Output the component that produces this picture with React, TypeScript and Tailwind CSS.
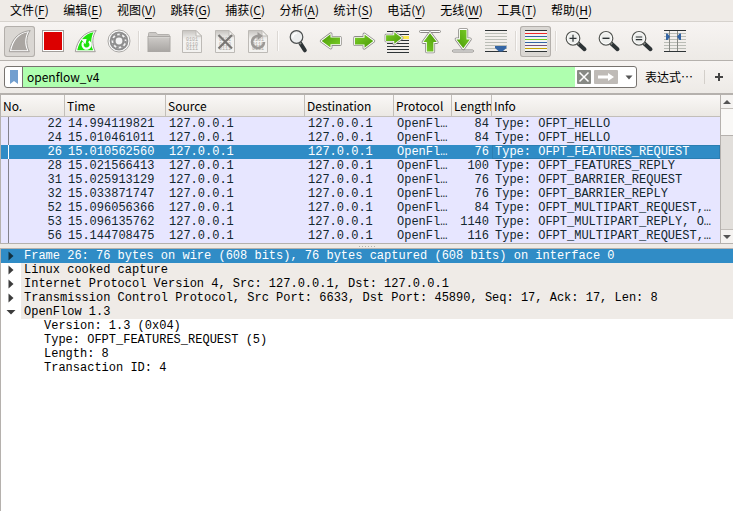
import type { ReactNode } from "react";
import clsx from "clsx";

const menus = [
  ["文件", "F"],
  ["编辑", "E"],
  ["视图", "V"],
  ["跳转", "G"],
  ["捕获", "C"],
  ["分析", "A"],
  ["统计", "S"],
  ["电话", "Y"],
  ["无线", "W"],
  ["工具", "T"],
  ["帮助", "H"],
];

type Packet = {
  no: number;
  time: string;
  length: number;
  info: string;
  selected?: boolean;
};

const packets: Packet[] = [
  { no: 22, time: "14.994119821", length: 84, info: "Type: OFPT_HELLO" },
  { no: 24, time: "15.010461011", length: 84, info: "Type: OFPT_HELLO" },
  {
    no: 26,
    time: "15.010562560",
    length: 76,
    info: "Type: OFPT_FEATURES_REQUEST",
    selected: true,
  },
  { no: 28, time: "15.021566413", length: 100, info: "Type: OFPT_FEATURES_REPLY" },
  { no: 31, time: "15.025913129", length: 76, info: "Type: OFPT_BARRIER_REQUEST" },
  { no: 32, time: "15.033871747", length: 76, info: "Type: OFPT_BARRIER_REPLY" },
  { no: 52, time: "15.096056366", length: 84, info: "Type: OFPT_MULTIPART_REQUEST,…" },
  { no: 53, time: "15.096135762", length: 1140, info: "Type: OFPT_MULTIPART_REPLY, O…" },
  { no: 56, time: "15.144708475", length: 116, info: "Type: OFPT_MULTIPART_REQUEST,…" },
];

const layers = [
  "Frame 26: 76 bytes on wire (608 bits), 76 bytes captured (608 bits) on interface 0",
  "Linux cooked capture",
  "Internet Protocol Version 4, Src: 127.0.0.1, Dst: 127.0.0.1",
  "Transmission Control Protocol, Src Port: 6633, Dst Port: 45890, Seq: 17, Ack: 17, Len: 8",
  "OpenFlow 1.3",
];

const fields = [
  "Version: 1.3 (0x04)",
  "Type: OFPT_FEATURES_REQUEST (5)",
  "Length: 8",
  "Transaction ID: 4",
];

function Icon({ children }: { children: ReactNode }) {
  return (
    <svg viewBox="0 0 23 23" className="size-[23px] shrink-0 overflow-visible" fill="none" aria-hidden="true">
      {children}
    </svg>
  );
}

function FinShape({ fill }: { fill: string }) {
  return (
    <>
      <path d="M1.3 21.7C3.5 9.5 10 1.8 22.2 .6C18.2 6 17.6 14.5 21.3 21.7Z" fill="#fff" stroke="#9f9c98" />
      <path d="M3.2 20.3C5.6 10 10.8 3.8 19.6 2.2C16.7 7.5 16.4 14.5 19.2 20.3Z" fill={fill} />
    </>
  );
}

function Paper() {
  return (
    <>
      <path d="M2.5.5H16L21.5 6V22.5H2.5Z" fill="url(#paper)" stroke="#bdbab6" />
      <path d="M16 .5V6H21.5Z" fill="#f4f3f1" stroke="#bdbab6" />
      <g fill="#aaa7a3" fontFamily="Liberation Mono" fontSize="5">
        <text x="6" y="11">0101</text>
        <text x="6" y="15.5">0110</text>
        <text x="6" y="20">0111</text>
      </g>
    </>
  );
}

// points to the right, centred on 12,11; the other directions are rotations
function Arrow({ transform }: { transform?: string }) {
  return (
    <g transform={transform} strokeLinejoin="round">
      <path d="M3 7.8H12.3V4.3L21.5 11L12.3 17.9V14.4H3Z" fill="#fff" stroke="#8c8a87" strokeWidth="3.4" />
      <path d="M3 7.8H12.3V4.3L21.5 11L12.3 17.9V14.4H3Z" fill="#fff" stroke="#fff" strokeWidth="1.8" />
      <path d="M3 7.8H12.5V4.4L21.3 11L12.5 17.8V14.4H3Z" fill="url(#green)" />
    </g>
  );
}

function Lens({ children }: { children: ReactNode }) {
  return (
    <Icon>
      <path d="M14 13.2L20.5 19.2" stroke="#2e3436" strokeWidth="4" strokeLinecap="round" />
      <path d="M13 12.3L15 14.2" stroke="#888a85" strokeWidth="2" />
      <circle cx="9" cy="8.3" r="6.8" fill="#eeefed" stroke="#555753" strokeWidth="1.2" />
      <circle cx="9" cy="8.3" r="5.6" stroke="#fff" strokeWidth=".8" />
      {children}
    </Icon>
  );
}

function Lines({ rows, color, x = 1 }: { rows: number[]; color: string; x?: number }) {
  return (
    <g fill={color}>
      {rows.map((y) => (
        <rect key={y} x={x} y={y} width="22" height="1" />
      ))}
    </g>
  );
}

type Tool = { label: string; icon: ReactNode; pressed?: boolean };

const toolGroups: Tool[][] = [
  [
    { label: "Start", pressed: true, icon: <Icon><FinShape fill="#aaa6a2" /></Icon> },
    {
      label: "Stop",
      icon: (
        <Icon>
          <rect x="1.5" y=".5" width="21" height="21" fill="#fff" stroke="#a19e9a" />
          <rect x="3" y="2" width="18" height="18" fill="#dc0000" />
        </Icon>
      ),
    },
    {
      label: "Restart",
      icon: (
        <Icon>
          <FinShape fill="#1fe20c" />
          <path d="M9.3 12.4A4 4 0 1 0 14.8 11.4" stroke="#fff" strokeWidth="2.2" />
          <path d="M7 9.3L12.6 9L11.4 14.2Z" fill="#fff" />
        </Icon>
      ),
    },
    {
      label: "Options",
      icon: (
        <Icon>
          <circle cx="12" cy="11" r="11" fill="#fff" stroke="#aaa8a5" />
          <circle cx="12" cy="11" r="9.4" fill="#8e8e8e" />
          <circle cx="12" cy="11" r="6.2" stroke="#f4f4f4" strokeWidth="2.6" />
          <circle cx="12" cy="11" r="6.5" stroke="#8e8e8e" strokeWidth="2" strokeDasharray="2.55 2.55" />
          <circle cx="12" cy="11" r="4.8" stroke="#8e8e8e" strokeWidth="2" />
          <circle cx="12" cy="11" r="3.4" fill="#f4f4f4" />
        </Icon>
      ),
    },
  ],
  [
    {
      label: "Open",
      icon: (
        <Icon>
          <path d="M1.5 5V3.5Q1.5 2.5 2.5 2.5H9L10.5 4.5H21.5Q22.5 4.5 22.5 5.5V8H1.5Z" fill="#cbc8c5" stroke="#b3b0ad" />
          <rect x="1" y="6.5" width="22" height="15" fill="url(#folder)" stroke="#aaa7a4" />
          <path d="M1.5 7.5H22.5" stroke="#d6d4d1" />
        </Icon>
      ),
    },
    { label: "Save", icon: <Icon><Paper /></Icon> },
    {
      label: "Close",
      icon: (
        <Icon>
          <Paper />
          <path d="M5.5 5L19 18.5M19 5L5.5 18.5" stroke="#787674" strokeWidth="2.2" />
        </Icon>
      ),
    },
    {
      label: "Reload",
      icon: (
        <Icon>
          <Paper />
          <path d="M12 6A6 6 0 1 0 18 12" stroke="#9c9996" strokeWidth="2.6" />
          <path d="M11.5 2L17 6L11.5 10Z" fill="#9c9996" />
        </Icon>
      ),
    },
  ],
  [
    {
      label: "Find",
      icon: (
        <Icon>
          <path d="M14.5 13.5L18.8 20.3" stroke="#2e3436" strokeWidth="4" strokeLinecap="round" />
          <path d="M13.3 12L14.8 14.2" stroke="#888a85" strokeWidth="2" />
          <circle cx="10.5" cy="7" r="6.3" fill="#eceeee" stroke="#4d5050" strokeWidth="1.2" />
          <path d="M6.7 7.5Q7 3.6 10.8 3.2" stroke="#fff" strokeWidth="1.4" />
        </Icon>
      ),
    },
    { label: "Back", icon: <Icon><Arrow transform="rotate(180 12 11)" /></Icon> },
    { label: "Forward", icon: <Icon><Arrow /></Icon> },
    {
      label: "Go to",
      icon: (
        <Icon>
          <Lines x={2} rows={[1, 4, 10, 13, 16, 19, 22]} color="#2e3436" />
          <rect x="15" y="6" width="9" height="3" fill="#fce94f" />
          <Arrow transform="translate(-1.5 -1.5) scale(.86)" />
        </Icon>
      ),
    },
    {
      label: "First",
      icon: (
        <Icon>
          <rect x="1.5" y=".5" width="21" height="2" rx="1" fill="#fff" stroke="#8c8a87" />
          <Arrow transform="translate(.5 2) rotate(-90 11.5 11)" />
        </Icon>
      ),
    },
    {
      label: "Last",
      icon: (
        <Icon>
          <rect x="1.5" y="20" width="21" height="2" rx="1" fill="#fff" stroke="#8c8a87" />
          <Arrow transform="translate(.8 -2.6) rotate(90 11.5 11)" />
        </Icon>
      ),
    },
    {
      label: "Auto scroll",
      icon: (
        <Icon>
          <Lines rows={[0, 21]} color="#2e3436" />
          <Lines rows={[3, 6, 9, 12, 15, 18]} color="#babdb6" />
          <path d="M11 16H22.5V18L18.5 21.5H15L11 18Z" fill="#3465a4" />
        </Icon>
      ),
    },
  ],
  [
    {
      label: "Colorize",
      pressed: true,
      icon: (
        <Icon>
          <rect x="1" y="0" width="22" height="22" fill="#f4f3f1" />
          <Lines rows={[0, 21]} color="#2e3436" />
          <Lines rows={[3]} color="#ef2929" />
          <Lines rows={[6, 12]} color="#3465a4" />
          <Lines rows={[9]} color="#73d216" />
          <Lines rows={[15]} color="#75507b" />
          <Lines rows={[18]} color="#c4a000" />
        </Icon>
      ),
    },
  ],
  [
    {
      label: "Zoom in",
      icon: <Lens><path d="M5.5 8.3H12.5M9 4.8V11.8" stroke="#2e3436" strokeWidth="1.2" /></Lens>,
    },
    {
      label: "Zoom out",
      icon: <Lens><path d="M5.5 8.3H12.5" stroke="#2e3436" strokeWidth="1.4" /></Lens>,
    },
    {
      label: "Normal size",
      icon: <Lens><path d="M5.8 7H12.2M5.8 9.7H12.2" stroke="#2e3436" strokeWidth="1.2" /></Lens>,
    },
    {
      label: "Resize columns",
      icon: (
        <Icon>
          <Lines rows={[0, 21]} color="#2e3436" />
          <Lines rows={[3, 6, 9, 12, 15, 18]} color="#babdb6" />
          <path d="M6.5 1V21M14.5 1V21" stroke="#888a85" />
          <path d="M3 3.5H4.5L7 6.8L4.5 10H3ZM18 3.5H16.5L14 6.8L16.5 10H18Z" fill="#3465a4" />
        </Icon>
      ),
    },
  ],
];

function Triangle({ d, className }: { d: string; className?: string }) {
  return (
    <svg viewBox="0 0 10 10" className={clsx("size-[10px] shrink-0", className)} aria-hidden="true">
      <path d={d} fill="currentColor" />
    </svg>
  );
}

function MenuBar() {
  return (
    <nav className="h-[22px] overflow-hidden border-b border-[#d6d2cd] px-[10px] whitespace-nowrap">
      <div className="flex max-w-[582px] justify-between">
        {menus.map(([name, key]) => (
          <button key={key} type="button" className="text-[12px] leading-[20px]">
            {name}(<span className="underline underline-offset-3">{key}</span>)
          </button>
        ))}
      </div>
    </nav>
  );
}

function Toolbar() {
  return (
    <div className="flex h-[39px] items-center gap-[2px] overflow-hidden border-b border-[#b5b1ad] bg-linear-to-b from-[#f7f4f2] to-[#edeae6] px-1">
      {toolGroups.map((group, i) => (
        <div key={i} className="flex items-center gap-[2px]">
          {i > 0 && <span className="mr-px ml-[2px] h-5 w-[2px] border-l border-[#dcd8d4] bg-[#fcfbfa]" />}
          {group.map((tool) => (
            <button
              key={tool.label}
              type="button"
              aria-label={tool.label}
              className={clsx(
                "flex size-[31px] items-center justify-center rounded-[3px]",
                tool.pressed && "bg-[#dad7d3] inset-ring inset-ring-[#b3afab]",
              )}
            >
              {tool.icon}
            </button>
          ))}
        </div>
      ))}
    </div>
  );
}

function FilterBar() {
  return (
    <div className="flex h-[34px] items-center border-b-2 border-[#b5b1ad] bg-linear-to-b from-[#f7f4f2] to-[#edeae6] pl-1">
      <div className="flex h-[22px] flex-1 items-stretch overflow-hidden rounded-[3px] border border-[#77736f] bg-white">
        <button type="button" aria-label="Bookmarks" className="flex w-[18px] items-center justify-center border-r border-[#77736f]">
          <svg viewBox="0 0 8 14" className="h-[14px] w-2" aria-hidden="true">
            <path d="M0 0H8V14L4 11L0 14Z" fill="#729fcf" />
          </svg>
        </button>
        <input
          type="text"
          aria-label="Display filter"
          defaultValue="openflow_v4"
          className="min-w-0 flex-1 bg-[#afffaf] px-1 text-[12px] leading-[20px] outline-none"
        />
        <div className="flex items-center pr-[2px] pl-[2px]">
          <button type="button" aria-label="Clear" className="mr-[3px]">
            <svg viewBox="0 0 14 14" className="size-[14px]" aria-hidden="true">
              <rect width="14" height="14" rx="1" fill="#888a85" />
              <path d="M2.5 2.5L11.5 11.5M11.5 2.5L2.5 11.5" stroke="#fff" strokeWidth="1.5" />
            </svg>
          </button>
          <button type="button" aria-label="Apply" className="mr-[6px]">
            <svg viewBox="0 0 24 14" className="h-[14px] w-6" aria-hidden="true">
              <rect width="24" height="14" rx="1" fill="#bfbbb7" />
              <path d="M4 5.5H14V3L20 7L14 11V8.5H4Z" fill="#fff" />
            </svg>
          </button>
          <button type="button" aria-label="History" className="text-[#555]">
            <Triangle d="M1.5 3.5H8.5L5 7.5Z" />
          </button>
        </div>
      </div>
      <button type="button" className="ml-2 text-[12px] leading-[20px]">
        表达式…
      </button>
      <span className="ml-[11px] h-[14px] w-px bg-[#d3cfca]" />
      <button type="button" aria-label="Add" className="flex w-[28px] justify-center">
        <svg viewBox="0 0 8 8" className="size-2" aria-hidden="true">
          <path d="M4 0V8M0 4H8" stroke="#444" strokeWidth="2" />
        </svg>
      </button>
    </div>
  );
}

const th =
  "h-[22px] overflow-hidden border-r border-b border-[#c2beb9] bg-linear-to-b from-[#faf8f6] to-[#ebe8e4] p-0 pl-[2px] text-left text-[12px] leading-[20px] font-normal text-clip whitespace-nowrap last:border-r-0";

function PacketList() {
  return (
    <section className="flex border-b border-l border-[#b5b1ad] bg-[#e7e6ff]">
      <div className="min-w-0 flex-1">
        <table className="w-full table-fixed border-separate border-spacing-0">
          <colgroup>
            <col className="w-[64px]" />
            <col className="w-[101px]" />
            <col className="w-[139px]" />
            <col className="w-[89px]" />
            <col className="w-[58px]" />
            <col className="w-[40px]" />
            <col />
          </colgroup>
          <thead>
            <tr>
              {["No.", "Time", "Source", "Destination", "Protocol", "Length", "Info"].map((name) => (
                <th key={name} className={th}>
                  {name}
                </th>
              ))}
            </tr>
          </thead>
          <tbody className="font-['Liberation_Mono',monospace] text-[12px] leading-[14px] whitespace-nowrap text-[#12272e]">
            {packets.map((p) => (
              <tr key={p.no} className={clsx(p.selected && "bg-[#308cc6] text-white")}>
                <td className="p-0 pr-[3px] pl-[7px]">
                  <div className="flex justify-between">
                    <span className={clsx("w-px", p.selected ? "bg-white" : "bg-[#83828c]")} />
                    {p.no}
                  </div>
                </td>
                <td className="p-0 pl-[3px]">{p.time}</td>
                <td className="p-0 pl-[3px]">127.0.0.1</td>
                <td className="p-0 pl-[3px]">127.0.0.1</td>
                <td className="p-0 pl-[3px]">OpenFl…</td>
                <td className="p-0 pr-[3px] text-right">{p.length}</td>
                <td className={clsx("overflow-hidden p-0 pl-[3px]", p.selected && "inset-ring inset-ring-[#2b7eb2]")}>
                  {p.info}
                </td>
              </tr>
            ))}
          </tbody>
        </table>
      </div>
      <div className="flex w-[13px] flex-col border-l border-[#b5b1ad] bg-[#e2dfdb] text-[#555]">
        <button type="button" aria-label="Scroll up" className="flex h-[14px] items-center justify-center border-b border-[#c2beb9] bg-[#f5f3f1]">
          <Triangle d="M1 7L5 3L9 7Z" />
        </button>
        <div className="h-[27px] border-b border-[#b5b1ad] bg-[#f9f8f6]" />
        <button type="button" aria-label="Scroll down" className="mt-auto flex h-[14px] items-center justify-center border-t border-[#c2beb9] bg-[#f5f3f1]">
          <Triangle d="M1 3L5 7L9 3Z" />
        </button>
      </div>
    </section>
  );
}

function PacketDetails() {
  return (
    <section className="flex-1 overflow-hidden border-t border-l border-[#b5b1ad] bg-white font-['Liberation_Mono',monospace] text-[12px] leading-[14px] whitespace-pre">
      <ul>
        {layers.map((text, i) => {
          const selected = i === 0;
          const open = i === layers.length - 1;
          return (
            <li key={text}>
              <button
                type="button"
                aria-expanded={open}
                className={clsx("flex w-full items-center text-left", selected && "bg-[#308cc6] text-white")}
              >
                <span className={clsx("flex w-5 justify-center", selected ? "text-[#12303f]" : "text-[#3c3c3c]")}>
                  <Triangle d={open ? "M.5 3H9.5L5 7.5Z" : "M2.5 .5L7.5 5L2.5 9.5Z"} />
                </span>
                <span className={clsx("flex-1 pl-[3px]", !selected && "bg-[#efebe7]")}>{text}</span>
              </button>
              {open && (
                <ul className="pl-[43px]">
                  {fields.map((field) => (
                    <li key={field}>{field}</li>
                  ))}
                </ul>
              )}
            </li>
          );
        })}
      </ul>
    </section>
  );
}

export default function App() {
  return (
    <div className="flex min-h-screen flex-col bg-[#efebe7] font-['Noto_Sans_CJK_SC',sans-serif] text-black">
      <svg className="absolute size-0" aria-hidden="true">
        <defs>
          <linearGradient id="green" x1="0" y1="0" x2="1" y2="1">
            <stop offset="0" stopColor="#7ccf2a" />
            <stop offset="1" stopColor="#4a9a06" />
          </linearGradient>
          <linearGradient id="folder" x1="0" y1="0" x2="0" y2="1">
            <stop offset="0" stopColor="#cfccc9" />
            <stop offset="1" stopColor="#a9a6a3" />
          </linearGradient>
          <linearGradient id="paper" x1="0" y1="0" x2="0" y2="1">
            <stop offset="0" stopColor="#c6c3bf" />
            <stop offset=".4" stopColor="#f3f2f0" />
          </linearGradient>
        </defs>
      </svg>
      <MenuBar />
      <Toolbar />
      <FilterBar />
      <PacketList />
      <div className="flex h-1 items-center justify-center gap-[2px]">
        {[0, 1, 2, 3, 4, 5].map((dot) => (
          <span key={dot} className="size-px bg-[#b5b1ad]" />
        ))}
      </div>
      <PacketDetails />
    </div>
  );
}
